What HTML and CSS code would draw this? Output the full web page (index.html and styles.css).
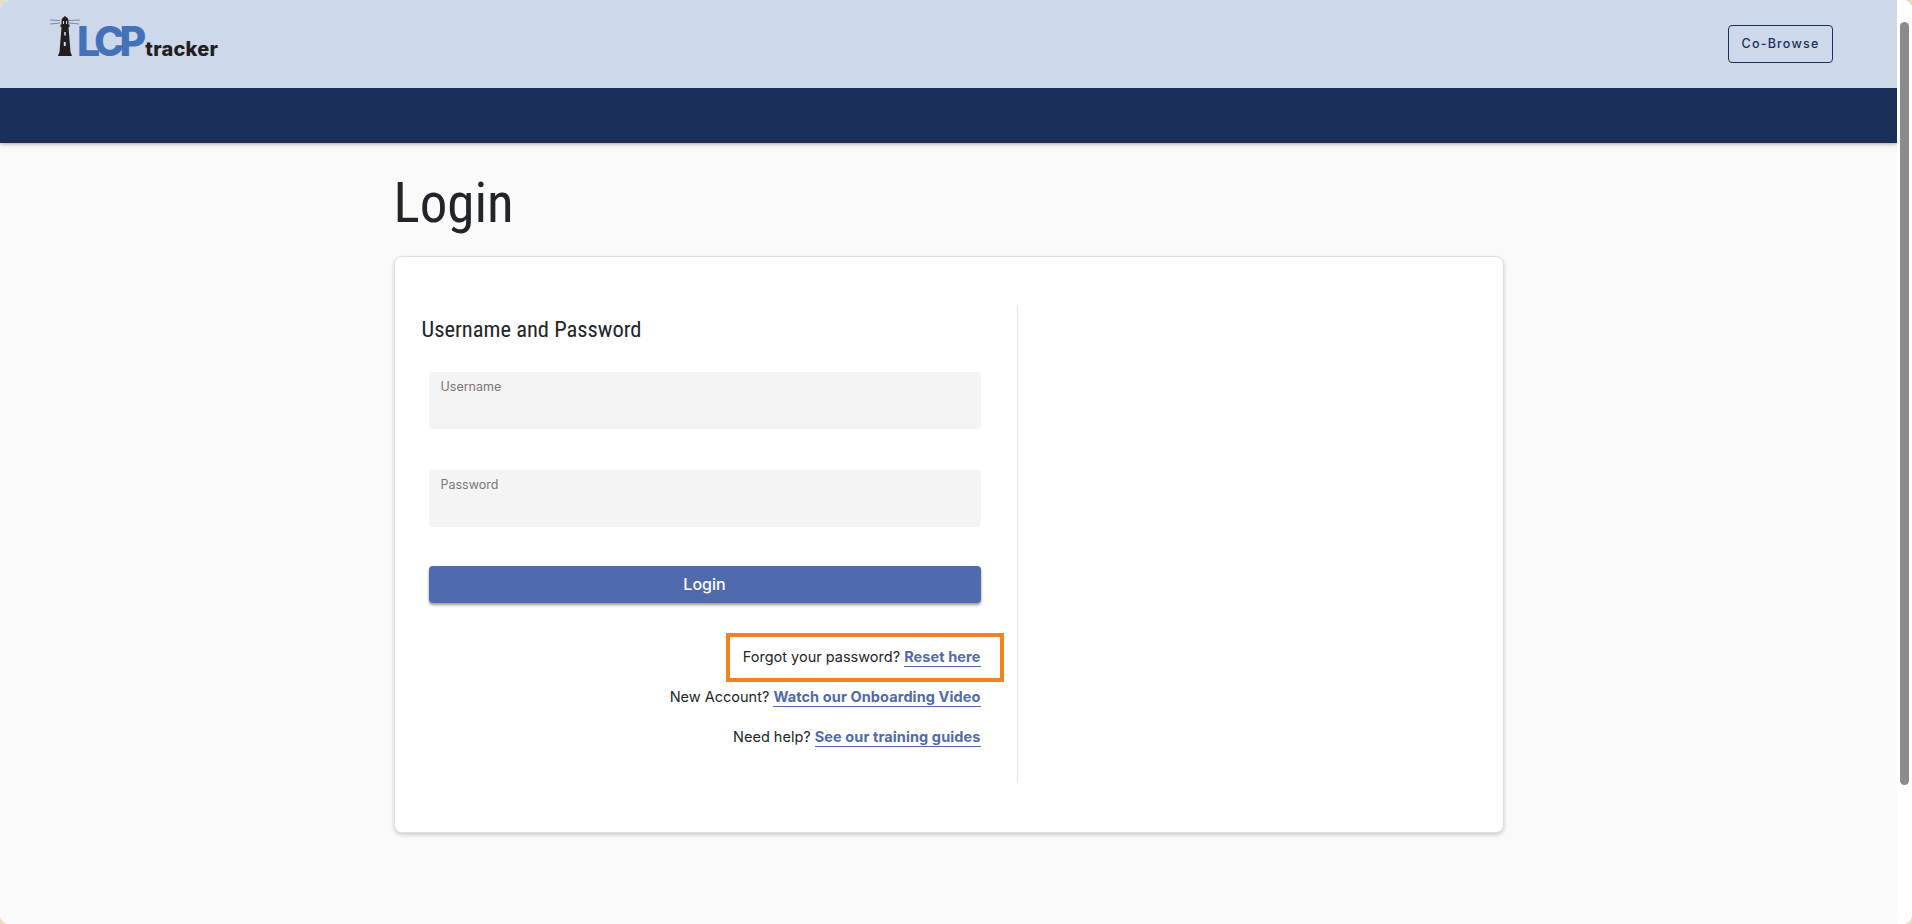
FILE: index.html
```html
<!DOCTYPE html>
<html lang="en">
<head>
<meta charset="utf-8">
<title>Login</title>
<link rel="stylesheet" href="styles.css">
</head>
<body>
<div class="window">
  <div class="page">
    <header class="topbar">
      <div class="brandbar">
        <a class="logo" href="#">
          <svg class="lighthouse" viewBox="0 0 34 40" width="34" height="40" aria-hidden="true">
            <path class="rays" d="M2 4l10 .5M2 8l10-1M21 4.500l11-.5M21 7l10 1"/>
            <path class="tower" d="M17 0l3 2.500v1h.5v5h1v2.500h-1l2 25 1.500 4h-14l1.500-4 2-25h-1v-2.500h1v-5h.5v-1z"/>
            <path class="window-dot" d="M16.200 16h1.600v3.500h-1.600zM15.800 26h2v4h-2zM15 5h1v3h-1zM18 5h1v3h-1z"/>
          </svg>
          <span class="logo-lcp">LCP</span><span class="logo-tracker">tracker</span>
        </a>
        <button class="cobrowse" type="button">Co-Browse</button>
      </div>
      <div class="navbar"></div>
    </header>
    <main class="content">
      <h1 class="title">Login</h1>
      <section class="card">
        <div class="col-left">
          <h2 class="subtitle">Username and Password</h2>
          <form class="form">
            <div class="field"><label class="field-label">Username</label></div>
            <div class="field"><label class="field-label">Password</label></div>
            <button class="submit" type="button">Login</button>
          </form>
          <div class="links">
            <p class="link-row">Forgot your password? <a href="#">Reset here</a><span class="highlight"></span></p>
            <p class="link-row">New Account? <a href="#">Watch our Onboarding Video</a></p>
            <p class="link-row">Need help? <a href="#">See our training guides</a></p>
          </div>
        </div>
        <div class="col-right"></div>
      </section>
    </main>
  </div>
  <div class="scrollbar"><div class="thumb"></div></div>
</div>
</body>
</html>
```
FILE: styles.css
```css
* { box-sizing: border-box; }
html, body { margin: 0; height: 100%; background: #ecdcb8; overflow: hidden; }
body { font-family: "Inter", "Open Sans", sans-serif; color: #212529; }
.window { display: flex; height: 924px; border-radius: 9px; overflow: hidden; background: #fff; }
.page { flex: 1; min-width: 0; background: #fafafa; overflow: hidden; }
.scrollbar { width: 15px; background: #fff; padding: 22px 3px 0 3px; }
.thumb { height: 763px; background: #8b8b8b; border-radius: 5px; }

.topbar { box-shadow: 0 1px 4px rgba(0,0,0,.35); position: relative; }
.brandbar { height: 88px; background: #cdd8ea; display: flex; align-items: flex-start; justify-content: space-between; padding: 16px 64px 0 48px; }
.navbar { height: 55px; background: #1b2f5b; }
.logo { display: flex; align-items: baseline; text-decoration: none; }
.lighthouse { flex: none; }
.rays { stroke: #555; stroke-width: 1; fill: none; opacity: .6; }
.tower { fill: #231f20; }
.window-dot { fill: #cdd8ea; }
.logo-lcp { font: 800 41px/30px "Inter", sans-serif; letter-spacing: -5px; color: #4472b8; margin-left: -5px; }
.logo-tracker { font: 800 20px/14px "Inter", sans-serif; letter-spacing: .25px; color: #231f20; margin-left: 4px; }
.cobrowse { margin-top: 9px; width: 105px; height: 38px; background: transparent; border: 1px solid #1b2f5b; border-radius: 4px; color: #1b2f5b; font: 500 12.500px/34px "Inter", sans-serif; letter-spacing: 1.200px; padding: 0; }

.content { width: 1110px; margin: 0 auto; }
.title { font: 400 55px/67px "Liberation Sans Narrow", "Roboto Condensed", "Liberation Sans", sans-serif; margin: 0; padding: 27px 0 19px 0; color: #212529; }
.card { display: flex; height: 577px; background: #fff; border: 1px solid #e0e0e0; border-radius: 8px; box-shadow: 0 2px 4px rgba(0,0,0,.18); padding: 48px 27px 49px 27px; }
.col-left { width: 596px; border-right: 1px solid #e6e6e6; padding: 6px 36px 0 0; }
.col-right { flex: 1; }
.subtitle { font: 400 22.500px/36px "Liberation Sans Narrow", "Roboto Condensed", "Liberation Sans", sans-serif; margin: 0; color: #212529; }
.form { display: flex; flex-direction: column; margin: 25px 0 0 7px; }
.field { height: 57px; margin-bottom: 41px; background: #f4f4f4; border-radius: 4px; padding: 3px 12px; }
.field + .field { margin-bottom: 39px; }
.field-label { font-size: 12.500px; line-height: 18px; color: #777; }
.submit { height: 37px; border: 0; border-radius: 4px; background: #4f6aad; color: #fff; font: 500 16px "Inter", sans-serif; box-shadow: 0 2px 3px rgba(0,0,0,.4); padding: 0 0 2px; }
.links { margin-top: 34px; }
.link-row { position: relative; margin: 0 0 0 auto; height: 40px; width: max-content; font-size: 14.500px; line-height: 40px; color: #212529; text-align: right; }
.link-row a { color: #4f6aad; font-weight: 700; letter-spacing: .1px; text-decoration: none; border-bottom: 1px solid #4f6aad; padding-bottom: 1px; }
.highlight { position: absolute; right: -23px; width: 278px; top: -4px; height: 49px; border: 4px solid #f58220; }
```
